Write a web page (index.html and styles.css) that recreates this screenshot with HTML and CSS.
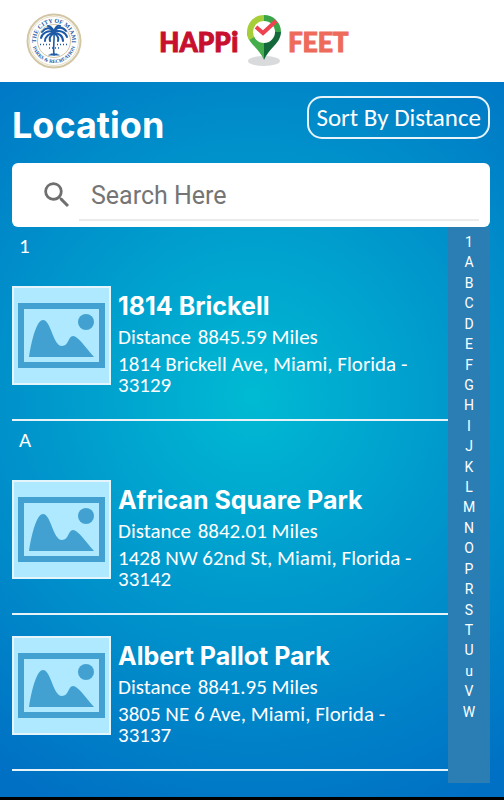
FILE: index.html
```
<!DOCTYPE html>
<html lang="en">
<head>
    <meta charset="UTF-8">
    <meta name="viewport" content="width=device-width, initial-scale=1.0">
    <title>Happi Feet - Location</title>
    <link rel="stylesheet" href="styles.css">
</head>
<body>
    <!-- shared icons -->
    <svg class="sprite" aria-hidden="true">
        <symbol id="placeholder" viewBox="0 0 95 95">
            <path fill="#43a1d1" fill-rule="evenodd" d="M4 15h87v65H4zM10 21v53h75V21z"/>
            <circle cx="72" cy="34" r="8" fill="#43a1d1"/>
            <path fill="#43a1d1" d="M15 69C18 50 23 32 29 32C37 32 39 58 48 58C55 58 54 48 59 48C64 48 71 59 80 69z"/>
        </symbol>
    </svg>

    <header class="top-bar">
        <svg class="seal" viewBox="0 0 56 56" role="img" aria-label="The City of Miami Parks and Recreation">
            <defs>
                <path id="arc-top" d="M12 36A18 18 0 1 1 44 36"/>
                <path id="arc-bottom" d="M6 28A22 22 0 0 0 50 28"/>
            </defs>
            <circle cx="28" cy="28" r="26.500" fill="#fff" stroke="#d2c6a4" stroke-width="2"/>
            <circle cx="28" cy="28" r="24.500" fill="none" stroke="#e6dec8" stroke-width="1"/>
            <circle cx="28" cy="28" r="16.500" fill="none" stroke="#d2c6a4" stroke-width="1"/>
            <text class="seal-text seal-city"><textPath href="#arc-top" startOffset="50%" text-anchor="middle">THE CITY OF MIAMI</textPath></text>
            <text class="seal-text"><textPath href="#arc-bottom" startOffset="50%" text-anchor="middle">PARKS &amp; RECREATION</textPath></text>
            <g fill="none" stroke="#1d5aa6" stroke-linecap="round">
                <path stroke-width="1.600" d="M28 20C28.500 26 27 34 28 42"/>
                <path stroke-width="2" d="M28 19C24 13 19 15 16 19M28 19C22 17 16 20 15 25M28 20C23 20 19 24 19 28M28 20C25 22 23 25 24 28M28 19C31 13 37 14 40 18M28 19C34 16 40 20 41 24M28 20C33 20 37 23 37 28M28 20C31 22 33 25 32 28M28 19C26 14 24 13 22 13M28 19C29 14 32 12 34 13"/>
                <path stroke-width="1.200" d="M23 42H33M25 41H31"/>
                <path stroke-width="1.500" stroke-dasharray="1 2" stroke-linecap="butt" d="M14 31.500H25M31 31.500H42M23 35H33"/>
            </g>
        </svg>
        <div class="brand">
            <span class="brand-happi">HAPPi</span>
            <svg class="pin" viewBox="0 0 36 54" aria-hidden="true">
                <ellipse cx="18" cy="47" rx="16" ry="5" fill="#d9dadb"/>
                <path fill="#45ad49" d="M1 18C1 23 4 28 8 32C12 36 16 41 18 46V18z"/>
                <path fill="#a6ce39" d="M18 1C8.500 1 1 8.500 1 18C1 21 2 24 3 26L18 18z"/>
                <path fill="#39a548" d="M18 1C27.500 1 35 8.500 35 18H18z"/>
                <path fill="#14693a" d="M35 18C35 23 32 28 28 32C24 36 20 41 18 46V18z"/>
                <circle cx="18" cy="18" r="11" fill="#fff"/>
                <path fill="none" stroke="#ee4250" stroke-width="4" d="M10 13L17 19L30 7"/>
            </svg>
            <span class="brand-feet">FEET</span>
        </div>
    </header>

    <main class="screen">
        <div class="title-row">
            <h1 class="title">Location</h1>
            <button type="button" class="sort-btn">Sort By Distance</button>
        </div>

        <form class="search-box" role="search">
            <label for="search" class="search-label" aria-label="Search">
                <svg viewBox="0 0 24 24" width="34" height="34" aria-hidden="true">
                    <path fill="#6f6f6f" d="M15.500 14h-.79l-.28-.27A6.470 6.470 0 0 0 16 9.500 6.500 6.500 0 1 0 9.500 16c1.610 0 3.090-.59 4.230-1.570l.27.28v.79l5 4.990L20.490 19l-4.990-5zm-6 0C7.010 14 5 11.990 5 9.500S7.010 5 9.500 5 14 7.010 14 9.500 11.990 14 9.500 14z"/>
                </svg>
            </label>
            <input type="text" id="search" class="search-input" placeholder="Search Here">
        </form>

        <div class="content">
            <div class="locations">
                <h2 class="section-label">1</h2>
                <article class="location">
                    <svg class="thumb"><use href="#placeholder"/></svg>
                    <div class="info">
                        <h3 class="name">1814 Brickell</h3>
                        <p class="distance">Distance <span>8845.59 Miles</span></p>
                        <p class="address">1814 Brickell Ave, Miami, Florida - 33129</p>
                    </div>
                </article>
                <h2 class="section-label">A</h2>
                <article class="location">
                    <svg class="thumb"><use href="#placeholder"/></svg>
                    <div class="info">
                        <h3 class="name">African Square Park</h3>
                        <p class="distance">Distance <span>8842.01 Miles</span></p>
                        <p class="address">1428 NW 62nd St, Miami, Florida - 33142</p>
                    </div>
                </article>
                <article class="location">
                    <svg class="thumb"><use href="#placeholder"/></svg>
                    <div class="info">
                        <h3 class="name">Albert Pallot Park</h3>
                        <p class="distance">Distance <span>8841.95 Miles</span></p>
                        <p class="address">3805 NE 6 Ave, Miami, Florida - 33137</p>
                    </div>
                </article>
            </div>
            <ul class="index">
                <li>1</li>
                <li>A</li>
                <li>B</li>
                <li>C</li>
                <li>D</li>
                <li>E</li>
                <li>F</li>
                <li>G</li>
                <li>H</li>
                <li>I</li>
                <li>J</li>
                <li>K</li>
                <li>L</li>
                <li>M</li>
                <li>N</li>
                <li>O</li>
                <li>P</li>
                <li>R</li>
                <li>S</li>
                <li>T</li>
                <li>U</li>
                <li>u</li>
                <li>V</li>
                <li>W</li>
            </ul>
        </div>
    </main>
</body>
</html>
```
FILE: styles.css
```
* {
    box-sizing: border-box;
}
body {
    margin: 0;
    min-height: 100vh;
    display: flex;
    flex-direction: column;
    background: #000;
    color: #fff;
    font-family: Carlito, "Open Sans", sans-serif;
}
h1, h2, h3, p, ul {
    margin: 0;
    padding: 0;
}
.sprite {
    position: absolute;
    width: 0;
    height: 0;
}

/* header */
.top-bar {
    display: grid;
    grid-template-columns: 1fr auto 1fr;
    align-items: center;
    height: 82px;
    padding: 0 22px 0 26px;
    background: #fff;
}
.seal {
    width: 56px;
    height: 56px;
}
.seal-text {
    font-family: "Liberation Serif", serif;
    font-size: 5px;
    font-weight: bold;
    fill: #1d5aa6;
}
.seal-city {
    font-size: 6px;
}
.brand {
    display: flex;
    align-items: center;
    gap: 7px;
    font-size: 31px;
    font-weight: bold;
    line-height: 54px;
}
.brand-happi {
    color: #c8102e;
    -webkit-text-stroke: 1px #c8102e;
}
.brand-feet {
    color: #ee6a5b;
    -webkit-text-stroke: 1px #ee6a5b;
}
.pin {
    width: 36px;
    height: 54px;
}

/* page */
.screen {
    flex: 1;
    margin-bottom: 3px;
    padding: 14px 14px 14px 12px;
    background: radial-gradient(circle 450px at 50% 44%, #00bad3, #0070c4);
}
.title-row {
    display: flex;
    justify-content: space-between;
    align-items: flex-start;
    height: 67px;
}
.title {
    font-family: "Century Gothic", Inter, sans-serif;
    font-size: 36px;
    font-weight: bold;
    line-height: 58px;
}
.sort-btn {
    height: 43px;
    padding: 0 7px;
    border: 2px solid #e8f3fa;
    border-radius: 15px;
    background: transparent;
    color: #fff;
    font-family: inherit;
    font-size: 25px;
}
.search-box {
    display: flex;
    height: 64px;
    padding: 0 11px 6px 28px;
    border-radius: 6px;
    background: #fff;
}
.search-label {
    display: flex;
    align-items: center;
    width: 39px;
    padding-top: 6px;
}
.search-input {
    flex: 1;
    min-width: 0;
    padding: 9px 12px 0;
    border: 0;
    border-bottom: 2px solid #ebebeb;
    background: transparent;
    color: #333;
    font-family: Roboto, sans-serif;
    font-size: 25px;
    outline: none;
}
.search-input::placeholder {
    color: #757575;
}

/* list */
.content {
    display: flex;
    min-height: 556px;
}
.locations {
    flex: 1;
    min-width: 0;
}
.section-label {
    padding-left: 7px;
    font-size: 21px;
    font-weight: normal;
    line-height: 38px;
}
.location {
    display: flex;
    gap: 7px;
    min-height: 156px;
    padding: 21px 0;
    border-bottom: 2px solid #e6f4fa;
}
.thumb {
    flex: none;
    width: 99px;
    height: 99px;
    border: 2px solid #e4f5fc;
    background: #aee9ff;
}
.info {
    flex: 1;
    min-width: 0;
    padding: 4px 24px 0 0;
}
.name {
    font-family: "Century Gothic", Inter, sans-serif;
    font-size: 25px;
    font-weight: bold;
    line-height: 32px;
}
.distance {
    margin-bottom: 2px;
    font-size: 21px;
    line-height: 30px;
}
.distance span {
    margin-left: 2px;
}
.address {
    font-size: 21px;
    line-height: 21px;
}

/* a-z index */
.index {
    display: flex;
    flex-direction: column;
    width: 42px;
    padding: 5px 0 61px;
    background: #2b7eb4;
    font-family: Roboto, sans-serif;
    font-size: 14px;
    list-style: none;
    text-align: center;
}
.index li {
    flex: 1;
    line-height: 20px;
}
```
